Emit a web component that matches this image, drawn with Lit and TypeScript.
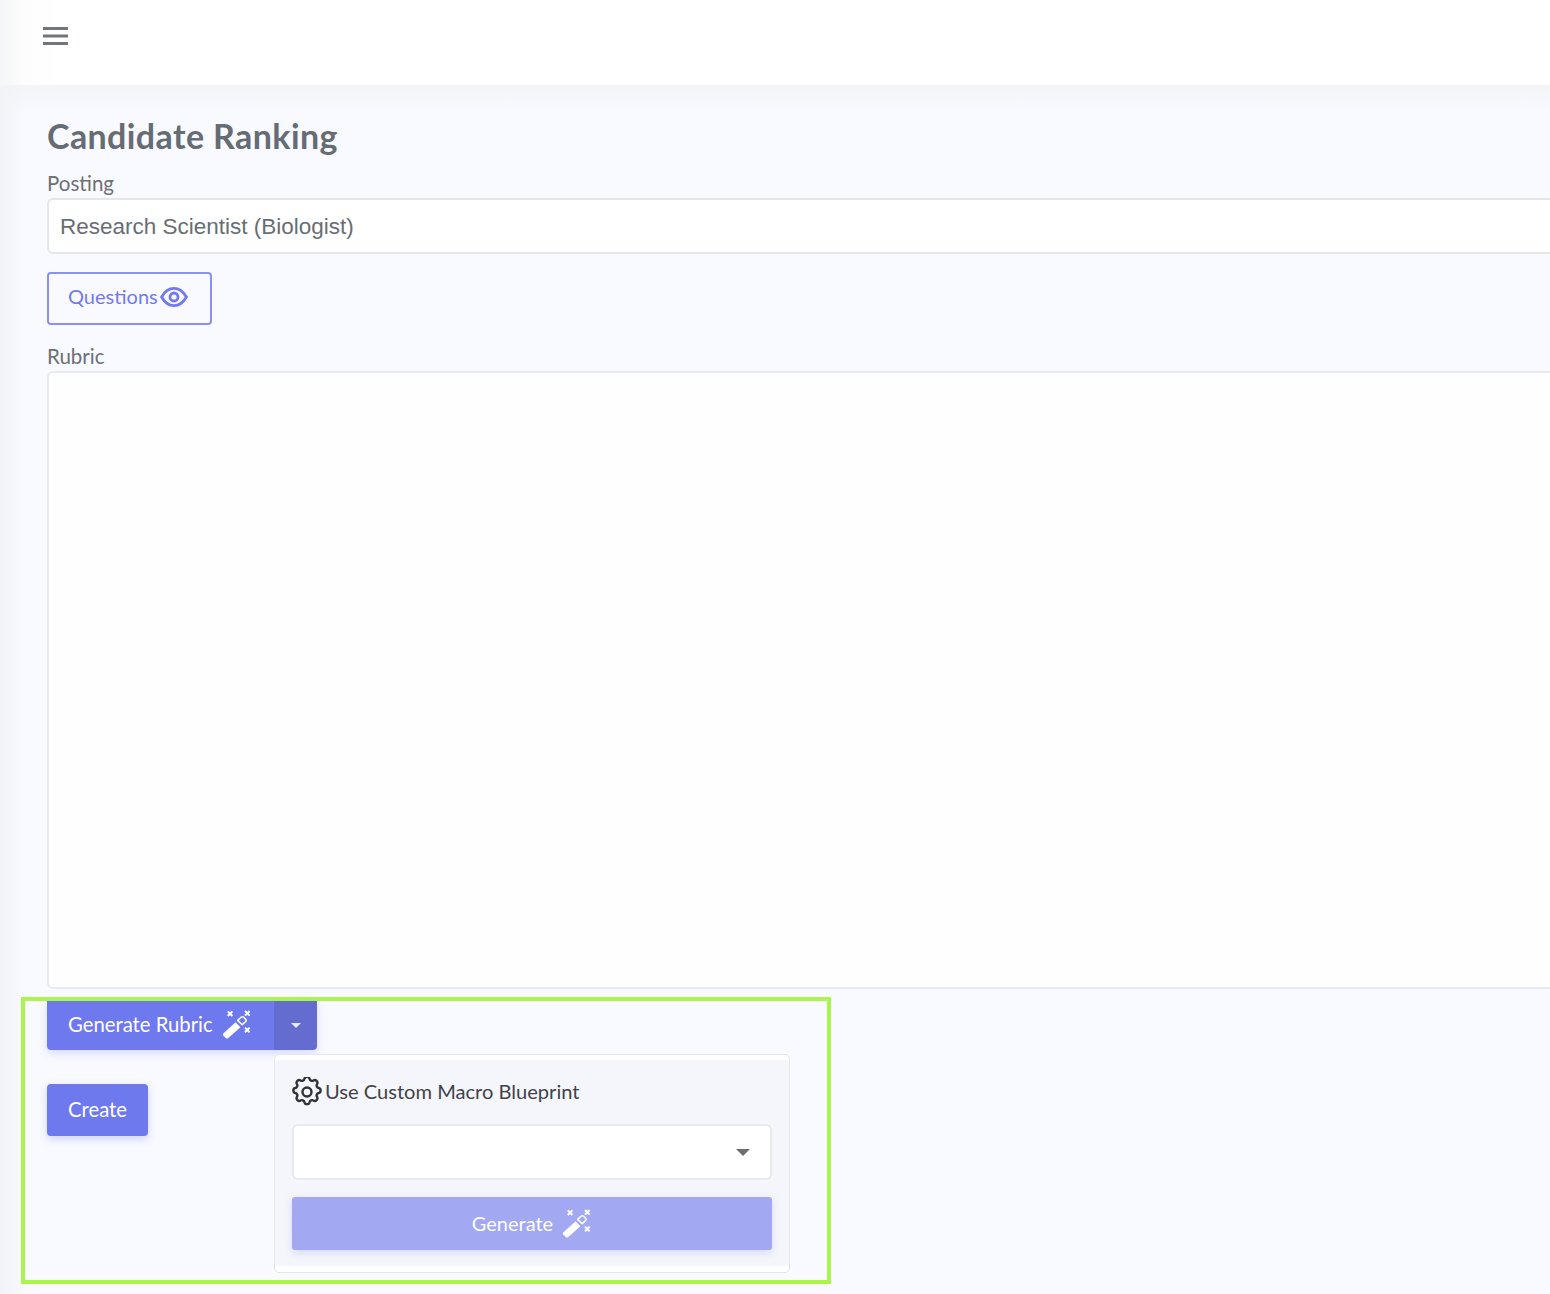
import { LitElement, html, css, svg } from "lit";
import { customElement } from "lit/decorators.js";

const wand = () => html`<svg class="wand" viewBox="0 0 30 30" fill="none">
  <path d="M1.2 24.4 L13.6 13.2 L18.4 18.2 L6 29.2 Q5 30 4 29.2 L1.2 26.4 Q0.4 25.4 1.2 24.4 Z" fill="#fff"/>
  <path d="M15.6 11.4 L19.4 8 Q20.4 7.3 21.4 8 L23.8 10.4 Q24.6 11.4 23.8 12.4 L20.2 15.8 Z" stroke="#fff" stroke-width="1.5" stroke-linejoin="round"/>
  ${svg`<g stroke="#fff" stroke-width="2">
    <path d="M5.8 2.4 L10.4 7 M10.4 2.4 L5.8 7"/>
    <path d="M23 2 L27.6 6.6 M27.6 2 L23 6.6"/>
    <path d="M23 18.6 L27.6 23.2 M27.6 18.6 L23 23.2"/>
  </g>`}
</svg>`;

@customElement("app-root")
export class AppRoot extends LitElement {
  static styles = css`
    :host {
      display: block;
      position: relative;
      width: 1550px;
      height: 1294px;
      overflow: hidden;
      background: #f9faff;
      font-family: "Lato", "Open Sans", sans-serif;
      color: #6e7379;
    }
    .topbar {
      height: 85px;
      background: linear-gradient(90deg, #f5f6f8 0, #fdfdfd 26px, #ffffff 60px);
      display: flex;
      align-items: center;
      padding: 0 0 13px 43px;
      box-sizing: border-box;
    }
    .burger { width: 25px; height: 18px; display: block; }
    .main {
      height: 1209px;
      box-sizing: border-box;
      padding: 0 0 0 47px;
      background:
        linear-gradient(180deg, #f3f4f7 0, rgba(249, 250, 255, 0) 30px),
        linear-gradient(90deg, #f2f3f7 0, #f9faff 26px);
      display: flex;
      flex-direction: column;
      align-items: flex-start;
    }
    h1 {
      margin: 29px 0 0;
      font-size: 34px;
      line-height: 43px;
      font-weight: 700;
      letter-spacing: 0.4px;
      color: #666c73;
      white-space: nowrap;
    }
    .label {
      font-size: 20.5px;
      line-height: 24px;
      color: #6d7075;
    }
    .posting-label { margin-top: 14px; }
    .posting {
      margin-top: 3px;
      width: 1560px;
      height: 56px;
      box-sizing: border-box;
      border: 2px solid #e4e6ea;
      border-radius: 6px;
      background: #ffffff;
      display: flex;
      align-items: center;
      padding: 1px 0 0 11px;
      font-family: "Liberation Sans", Arial, sans-serif;
      font-size: 22.5px;
      color: #686d74;
    }
    .outline {
      margin-top: 18px;
      width: 165px;
      height: 53px;
      box-sizing: border-box;
      border: 2px solid #8a90f5;
      border-radius: 4px;
      display: flex;
      align-items: center;
      gap: 2px;
      padding: 0 0 5px 19px;
      color: #7279ef;
      font-size: 20px;
    }
    .eye { width: 28px; height: 24px; display: block; margin-top: 2px; }
    .rubric-label { margin-top: 19px; }
    .rubric {
      margin-top: 3px;
      width: 1560px;
      height: 618px;
      box-sizing: border-box;
      border: 2px solid #e8eaee;
      border-radius: 6px;
      background: #fefefe;
    }
    .split {
      margin-top: 12px;
      display: flex;
      height: 49px;
      width: 270px;
      border-radius: 0 0 4px 4px;
      overflow: hidden;
      box-shadow: 0 3px 8px rgba(105, 115, 238, 0.25);
      color: #fff;
      font-size: 20.3px;
    }
    .split-main {
      width: 227px;
      background: #6f79ee;
      display: flex;
      align-items: center;
      padding: 0 0 3px 21px;
      box-sizing: border-box;
      gap: 9px;
    }
    .split-caret {
      width: 43px;
      background: #646dcf;
      display: flex;
      align-items: center;
      justify-content: center;
    }
    .caret-w {
      width: 0;
      height: 0;
      border-left: 5.5px solid transparent;
      border-right: 5.5px solid transparent;
      border-top: 5.5px solid #e9eafb;
    }
    .wand { width: 30px; height: 30px; display: block; }
    .create {
      margin-top: 34px;
      width: 101px;
      height: 52px;
      box-sizing: border-box;
      padding: 0 0 3px 21px;
      display: flex;
      align-items: center;
      background: #6f79ee;
      color: #fff;
      font-size: 20.3px;
      border-radius: 4px;
      box-shadow: 0 3px 8px rgba(105, 115, 238, 0.3);
    }
    .menu {
      position: absolute;
      left: 274px;
      top: 1054px;
      width: 516px;
      height: 219px;
      box-sizing: border-box;
      border: 1.5px solid #e4e6ea;
      border-radius: 5px;
      background: #f5f6fb;
      padding: 5px 17px 0 17px;
      box-shadow: inset 0 5px 0 #fff, inset 0 -6px 0 #fff;
    }
    .menu-head {
      display: flex;
      align-items: center;
      gap: 3px;
      height: 64px;
      color: #3f4347;
      font-size: 20.1px;
    }
    .menu-head span { padding-bottom: 2px; }
    .gear { width: 30px; height: 30px; display: block; margin-bottom: 1px; }
    .select {
      height: 56px;
      box-sizing: border-box;
      border: 2px solid #e8eaee;
      border-radius: 6px;
      background: #fff;
      display: flex;
      align-items: center;
      justify-content: flex-end;
      padding-right: 20px;
    }
    .caret-g {
      width: 0;
      height: 0;
      border-left: 7px solid transparent;
      border-right: 7px solid transparent;
      border-top: 7px solid #6b6d70;
    }
    .generate {
      margin-top: 17px;
      height: 53px;
      box-sizing: border-box;
      padding-bottom: 2px;
      border-radius: 3px;
      background: #a2a8f1;
      color: #fff;
      font-size: 20px;
      display: flex;
      align-items: center;
      justify-content: center;
      gap: 9px;
      box-shadow: 0 3px 8px rgba(105, 115, 238, 0.22);
    }
    .highlight {
      position: absolute;
      left: 21px;
      top: 997px;
      width: 810px;
      height: 287px;
      box-sizing: border-box;
      border: 4px solid #a9f54a;
      pointer-events: none;
    }
  `;

  render() {
    return html`
      <div class="topbar">
        <svg class="burger" viewBox="0 0 25 18" fill="#71767d">
          <rect x="0" y="0" width="25" height="3" />
          <rect x="0" y="7.5" width="25" height="3" />
          <rect x="0" y="15" width="25" height="3" />
        </svg>
      </div>
      <div class="main">
        <h1>Candidate Ranking</h1>
        <div class="label posting-label">Posting</div>
        <div class="posting">Research Scientist (Biologist)</div>
        <div class="outline">
          <span>Questions</span>
          <svg class="eye" viewBox="0 0 28 24" fill="none" stroke="#7279ef" stroke-width="2.8">
            <path d="M1.6 12 C5 6 9 3.4 14 3.4 C19 3.4 23 6 26.4 12 C23 18 19 20.6 14 20.6 C9 20.6 5 18 1.6 12 Z" />
            <circle cx="14" cy="12" r="4" />
          </svg>
        </div>
        <div class="label rubric-label">Rubric</div>
        <div class="rubric"></div>
        <div class="split">
          <div class="split-main"><span>Generate Rubric</span>${wand()}</div>
          <div class="split-caret"><div class="caret-w"></div></div>
        </div>
        <div class="create">Create</div>
      </div>
      <div class="menu">
        <div class="menu-head">
          <svg class="gear" viewBox="2 2 20 20" fill="none" stroke="#2f3336" stroke-width="1.6" stroke-linejoin="round" stroke-linecap="round">
            <path d="M10.3 3.2c.4-1.7 3-1.7 3.4 0a1.7 1.7 0 0 0 2.6 1.1c1.5-.9 3.3.9 2.4 2.4a1.7 1.7 0 0 0 1.1 2.6c1.7.4 1.7 3 0 3.4a1.7 1.7 0 0 0-1.1 2.6c.9 1.5-.9 3.3-2.4 2.4a1.7 1.7 0 0 0-2.6 1.1c-.4 1.7-3 1.7-3.4 0a1.7 1.7 0 0 0-2.6-1.1c-1.5.9-3.3-.9-2.4-2.4a1.7 1.7 0 0 0-1.1-2.6c-1.7-.4-1.7-3 0-3.4a1.7 1.7 0 0 0 1.1-2.6c-.9-1.5.9-3.3 2.4-2.4a1.7 1.7 0 0 0 2.6-1.1z" />
            <circle cx="12" cy="12" r="3" />
          </svg>
          <span>Use Custom Macro Blueprint</span>
        </div>
        <div class="select"><div class="caret-g"></div></div>
        <div class="generate"><span>Generate</span>${wand()}</div>
      </div>
      <div class="highlight"></div>
    `;
  }
}
